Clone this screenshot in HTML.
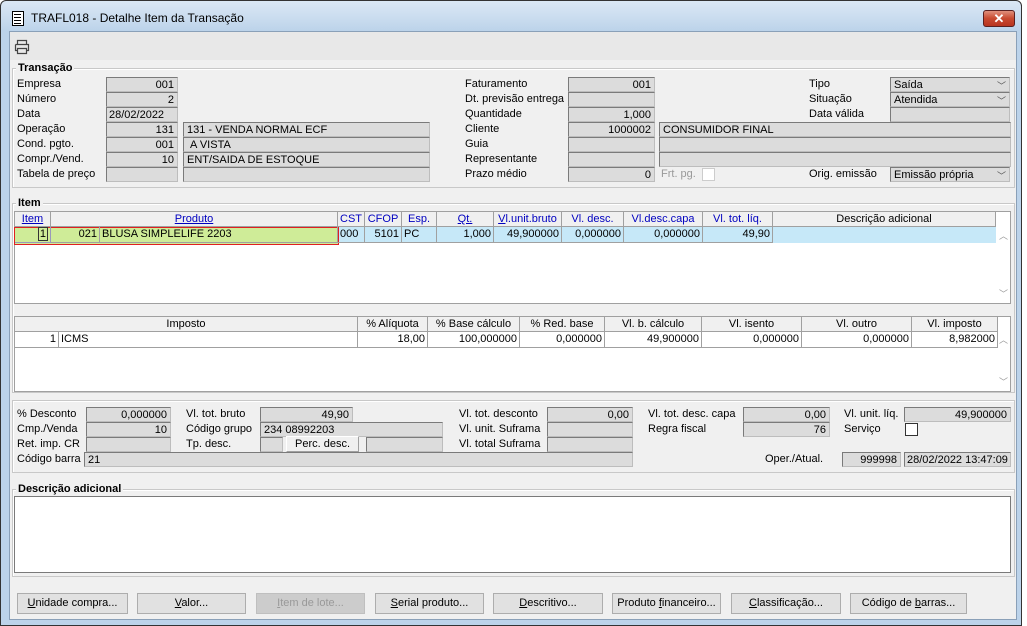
<!DOCTYPE html>
<html><head><meta charset="utf-8"><style>
*{box-sizing:border-box;margin:0;padding:0}
body{width:1027px;height:626px;overflow:hidden;background:#fff;font-family:"Liberation Sans",sans-serif;font-size:11px;color:#000;position:relative}
.a{position:absolute}
.win{left:0;top:0;width:1022px;height:626px;border:1px solid #333;border-radius:6px 6px 0 0;background:linear-gradient(#dbe8f5,#bcd3ea 30px,#bcd3ea)}
.client{left:9px;top:31px;width:1008px;height:589px;background:#f0f0f0;border:1px solid #8aa0b8}
.tb{left:10px;top:32px;width:1006px;height:28px;background:#e8e8e8}
.f{position:absolute;height:15px;background:#dcdcdc;border:1px solid #7a7a7a;border-right-color:#bdbdbd;border-bottom-color:#bdbdbd;padding:0 3px;line-height:14px;white-space:nowrap;overflow:hidden}
.r{text-align:right}
.l{position:absolute;line-height:15px;white-space:nowrap}
.g{position:absolute;border:1px solid #c8c8c8;box-shadow:inset 1px 1px 0 #fff}
.gt{position:absolute;background:#f0f0f0;font-weight:bold;padding:0 2px;line-height:12px}
.grid{position:absolute;background:#fff;border:1px solid #a0a0a0}
.h{position:absolute;height:15px;background:#f0f0f0;border-right:1px solid #a0a0a0;border-bottom:1px solid #a0a0a0;text-align:center;line-height:14px;white-space:nowrap;overflow:hidden}
.hb{color:#0000c0}
.c{position:absolute;height:16px;border-right:1px solid #a0a0a0;border-bottom:1px solid #a0a0a0;line-height:15px;padding:0 2px;white-space:nowrap;overflow:hidden}
.btn{position:absolute;top:593px;height:21px;background:#e1e1e1;border:1px solid #adadad;text-align:center;line-height:19px}
.dd{position:absolute;right:3px;top:1px;font-size:9px;color:#555}
.cb{position:absolute;width:13px;height:13px;background:#fff;border:1px solid #333}
</style></head><body>
<div class="a win"></div>
<div class="a" style="left:12px;top:11px;width:12px;height:15px;background:#fff;border:1px solid #000"></div>
<div class="a" style="left:14px;top:14px;width:7px;height:1px;background:#000;box-shadow:0 3px 0 #000,0 6px 0 #000,0 9px 0 #000"></div>
<div class="l" style="left:31px;top:11px;font-size:12px;color:#000">TRAFL018 - Detalhe Item da Transação</div>
<div class="a" style="left:983px;top:10px;width:32px;height:17px;background:linear-gradient(#e0907c,#c84a30 50%,#b83420);border:1px solid #5a2020;border-radius:3px;color:#fff;font-weight:bold;text-align:center;line-height:15px;font-size:13px">✕</div>
<div class="a client"></div>
<div class="a tb"></div>
<svg class="a" style="left:13px;top:38px" width="18" height="18" viewBox="0 0 18 18"><path d="M4.5 6V2.5h9V6M2.5 6.5h13v6h-2M4.5 12.5h-2v-6M4.5 10.5h9v5h-9z" fill="none" stroke="#444" stroke-width="1.2"/></svg>

<div class="g" style="left:12px;top:68px;width:1003px;height:120px"></div>
<div class="gt" style="left:16px;top:62px">Transação</div>
<div class="l" style="left:17px;top:77px">Empresa</div>
<div class="l" style="left:17px;top:92px">Número</div>
<div class="l" style="left:17px;top:107px">Data</div>
<div class="l" style="left:17px;top:122px">Operação</div>
<div class="l" style="left:17px;top:137px">Cond. pgto.</div>
<div class="l" style="left:17px;top:152px">Compr./Vend.</div>
<div class="l" style="left:17px;top:167px">Tabela de preço</div>
<div class="f r" style="left:106px;top:77px;width:72px">001</div>
<div class="f r" style="left:106px;top:92px;width:72px">2</div>
<div class="f" style="left:106px;top:107px;width:72px;padding-left:2px">28/02/2022</div>
<div class="f r" style="left:106px;top:122px;width:72px">131</div>
<div class="f r" style="left:106px;top:137px;width:72px">001</div>
<div class="f r" style="left:106px;top:152px;width:72px">10</div>
<div class="f" style="left:106px;top:167px;width:72px"></div>
<div class="f" style="left:183px;top:122px;width:247px">131 - VENDA NORMAL ECF</div>
<div class="f" style="left:183px;top:137px;width:247px">&nbsp;A VISTA</div>
<div class="f" style="left:183px;top:152px;width:247px">ENT/SAIDA DE ESTOQUE</div>
<div class="f" style="left:183px;top:167px;width:247px"></div>

<div class="l" style="left:465px;top:77px">Faturamento</div>
<div class="l" style="left:465px;top:92px">Dt. previsão entrega</div>
<div class="l" style="left:465px;top:107px">Quantidade</div>
<div class="l" style="left:465px;top:122px">Cliente</div>
<div class="l" style="left:465px;top:137px">Guia</div>
<div class="l" style="left:465px;top:152px">Representante</div>
<div class="l" style="left:465px;top:167px">Prazo médio</div>
<div class="f r" style="left:568px;top:77px;width:87px">001</div>
<div class="f" style="left:568px;top:92px;width:87px"></div>
<div class="f r" style="left:568px;top:107px;width:87px">1,000</div>
<div class="f r" style="left:568px;top:122px;width:87px">1000002</div>
<div class="f" style="left:568px;top:137px;width:87px"></div>
<div class="f" style="left:568px;top:152px;width:87px"></div>
<div class="f r" style="left:568px;top:167px;width:87px">0</div>
<div class="l" style="left:661px;top:167px;color:#999">Frt. pg.</div>
<div class="a" style="left:702px;top:168px;width:13px;height:13px;background:#fff;border:1px solid #ccc"></div>
<div class="f" style="left:659px;top:122px;width:352px">CONSUMIDOR FINAL</div>
<div class="f" style="left:659px;top:137px;width:352px"></div>
<div class="f" style="left:659px;top:152px;width:352px"></div>
<div class="l" style="left:809px;top:77px">Tipo</div>
<div class="l" style="left:809px;top:92px">Situação</div>
<div class="l" style="left:809px;top:107px">Data válida</div>
<div class="l" style="left:809px;top:167px">Orig. emissão</div>
<div class="f" style="left:890px;top:77px;width:120px">Saída<span class="dd">﹀</span></div>
<div class="f" style="left:890px;top:92px;width:120px">Atendida<span class="dd">﹀</span></div>
<div class="f" style="left:890px;top:107px;width:120px"></div>
<div class="f" style="left:890px;top:167px;width:120px">Emissão própria<span class="dd">﹀</span></div>

<div class="g" style="left:12px;top:203px;width:1003px;height:190px"></div>
<div class="gt" style="left:16px;top:197px">Item</div>
<div class="grid" style="left:14px;top:211px;width:997px;height:93px"></div>
<div class="h hb" style="left:15px;top:212px;width:36px"><u>Item</u></div>
<div class="h hb" style="left:51px;top:212px;width:287px"><u>Produto</u></div>
<div class="h hb" style="left:338px;top:212px;width:27px">CST</div>
<div class="h hb" style="left:365px;top:212px;width:37px">CFOP</div>
<div class="h hb" style="left:402px;top:212px;width:35px">Esp.</div>
<div class="h hb" style="left:437px;top:212px;width:57px"><u>Qt.</u></div>
<div class="h hb" style="left:494px;top:212px;width:68px"><u>V</u>l.unit.bruto</div>
<div class="h hb" style="left:562px;top:212px;width:62px">Vl. desc.</div>
<div class="h hb" style="left:624px;top:212px;width:79px">Vl.desc.capa</div>
<div class="h hb" style="left:703px;top:212px;width:70px">Vl. tot. líq.</div>
<div class="h" style="left:773px;top:212px;width:223px">Descrição adicional</div>
<div class="a" style="left:15px;top:227px;width:981px;height:16px;background:#c6e8f8"></div>
<div class="a" style="left:14px;top:227px;width:325px;height:18px;background:#cfec98;border:1px solid #e02020"></div>
<div class="c r" style="left:15px;top:227px;width:36px;border-color:#99b"><span style="border:1px solid #333;padding:0 1px">1</span></div>
<div class="c r" style="left:51px;top:227px;width:49px">021</div>
<div class="c" style="left:100px;top:227px;width:238px">BLUSA SIMPLELIFE 2203</div>
<div class="c" style="left:338px;top:227px;width:27px">000</div>
<div class="c r" style="left:365px;top:227px;width:37px">5101</div>
<div class="c" style="left:402px;top:227px;width:35px">PC</div>
<div class="c r" style="left:437px;top:227px;width:57px">1,000</div>
<div class="c r" style="left:494px;top:227px;width:68px">49,900000</div>
<div class="c r" style="left:562px;top:227px;width:62px">0,000000</div>
<div class="c r" style="left:624px;top:227px;width:79px">0,000000</div>
<div class="c r" style="left:703px;top:227px;width:70px">49,90</div>
<div class="l" style="left:999px;top:229px;color:#999;font-size:9px">︿</div>
<div class="l" style="left:999px;top:287px;color:#999;font-size:9px">﹀</div>

<div class="grid" style="left:14px;top:316px;width:997px;height:76px"></div>
<div class="h" style="left:15px;top:317px;width:343px">Imposto</div>
<div class="h" style="left:358px;top:317px;width:70px">% Alíquota</div>
<div class="h" style="left:428px;top:317px;width:92px">% Base cálculo</div>
<div class="h" style="left:520px;top:317px;width:85px">% Red. base</div>
<div class="h" style="left:605px;top:317px;width:97px">Vl. b. cálculo</div>
<div class="h" style="left:702px;top:317px;width:100px">Vl. isento</div>
<div class="h" style="left:802px;top:317px;width:110px">Vl. outro</div>
<div class="h" style="left:912px;top:317px;width:86px">Vl. imposto</div>
<div class="c r" style="left:15px;top:332px;width:44px">1</div>
<div class="c" style="left:59px;top:332px;width:299px">ICMS</div>
<div class="c r" style="left:358px;top:332px;width:70px">18,00</div>
<div class="c r" style="left:428px;top:332px;width:92px">100,000000</div>
<div class="c r" style="left:520px;top:332px;width:85px">0,000000</div>
<div class="c r" style="left:605px;top:332px;width:97px">49,900000</div>
<div class="c r" style="left:702px;top:332px;width:100px">0,000000</div>
<div class="c r" style="left:802px;top:332px;width:110px">0,000000</div>
<div class="c r" style="left:912px;top:332px;width:86px">8,982000</div>
<div class="l" style="left:999px;top:333px;color:#999;font-size:9px">︿</div>
<div class="l" style="left:999px;top:375px;color:#999;font-size:9px">﹀</div>

<div class="g" style="left:12px;top:400px;width:1003px;height:73px"></div>
<div class="l" style="left:17px;top:407px">% Desconto</div>
<div class="l" style="left:17px;top:422px">Cmp./Venda</div>
<div class="l" style="left:17px;top:437px">Ret. imp. CR</div>
<div class="l" style="left:17px;top:452px">Código barra</div>
<div class="f r" style="left:86px;top:407px;width:85px">0,000000</div>
<div class="f r" style="left:86px;top:422px;width:85px">10</div>
<div class="f" style="left:86px;top:437px;width:85px"></div>
<div class="f" style="left:84px;top:452px;width:549px">21</div>
<div class="l" style="left:186px;top:407px">Vl. tot. bruto</div>
<div class="l" style="left:186px;top:422px">Código grupo</div>
<div class="l" style="left:186px;top:437px">Tp. desc.</div>
<div class="f r" style="left:260px;top:407px;width:93px">49,90</div>
<div class="f" style="left:260px;top:422px;width:183px">234 08992203</div>
<div class="f" style="left:260px;top:437px;width:23px"></div>
<div class="a" style="left:286px;top:436px;width:73px;height:16px;border:1px solid #a0a0a0;border-top-color:#fff;border-left-color:#fff;text-align:center;line-height:14px">Perc. desc.</div>
<div class="f" style="left:366px;top:437px;width:77px"></div>
<div class="l" style="left:459px;top:407px">Vl. tot. desconto</div>
<div class="l" style="left:459px;top:422px">Vl. unit. Suframa</div>
<div class="l" style="left:459px;top:437px">Vl. total Suframa</div>
<div class="f r" style="left:547px;top:407px;width:86px">0,00</div>
<div class="f" style="left:547px;top:422px;width:86px"></div>
<div class="f" style="left:547px;top:437px;width:86px"></div>
<div class="l" style="left:648px;top:407px">Vl. tot. desc. capa</div>
<div class="l" style="left:648px;top:422px">Regra fiscal</div>
<div class="f r" style="left:743px;top:407px;width:87px">0,00</div>
<div class="f r" style="left:743px;top:422px;width:87px">76</div>
<div class="l" style="left:844px;top:407px">Vl. unit. líq.</div>
<div class="l" style="left:844px;top:422px">Serviço</div>
<div class="f r" style="left:904px;top:407px;width:107px">49,900000</div>
<div class="cb" style="left:905px;top:423px"></div>
<div class="l" style="left:765px;top:452px">Oper./Atual.</div>
<div class="f r" style="left:842px;top:452px;width:59px">999998</div>
<div class="f" style="left:904px;top:452px;width:107px;padding-left:2px">28/02/2022 13:47:09</div>

<div class="g" style="left:12px;top:489px;width:1003px;height:88px"></div>
<div class="gt" style="left:16px;top:483px">Descrição adicional</div>
<div class="a" style="left:14px;top:496px;width:997px;height:77px;background:#fff;border:1px solid #7a7a7a"></div>

<div class="btn" style="left:17px;width:111px"><u>U</u>nidade compra...</div>
<div class="btn" style="left:137px;width:109px"><u>V</u>alor...</div>
<div class="btn" style="left:256px;width:109px;color:#999;background:#ccc;border-color:#bfbfbf"><u>I</u>tem de lote...</div>
<div class="btn" style="left:375px;width:109px"><u>S</u>erial produto...</div>
<div class="btn" style="left:493px;width:110px"><u>D</u>escritivo...</div>
<div class="btn" style="left:612px;width:109px">Produto <u>f</u>inanceiro...</div>
<div class="btn" style="left:731px;width:110px"><u>C</u>lassificação...</div>
<div class="btn" style="left:850px;width:117px">Código de <u>b</u>arras...</div>
</body></html>
